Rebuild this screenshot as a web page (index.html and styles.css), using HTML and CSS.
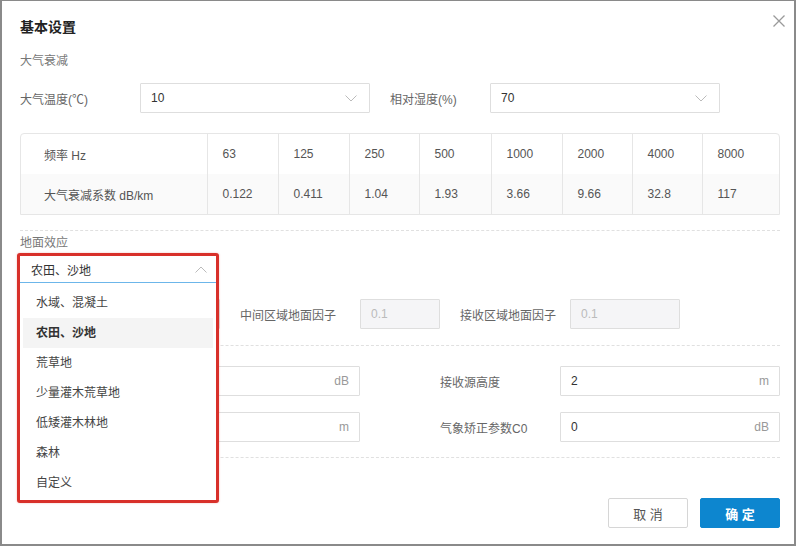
FILE: index.html
```html
<!DOCTYPE html>
<html lang="zh-CN">
<head>
<meta charset="utf-8">
<title>基本设置</title>
<link rel="stylesheet" href="styles.css">
</head>
<body>
<div class="dialog">
  <div class="header">
    <h1 class="title">基本设置</h1>
    <button class="close" type="button" aria-label="关闭">
      <svg width="14" height="14" viewBox="0 0 14 14"><path d="M1.5 1.5 L12.5 12.5 M12.5 1.5 L1.5 12.5" stroke="#9a9a9a" stroke-width="1.3" fill="none"/></svg>
    </button>
  </div>

  <div class="section-label">大气衰减</div>
  <div class="row atm-row">
    <span class="lbl w120">大气温度(℃)</span>
    <div class="select w230"><span class="val">10</span>
      <svg class="chev" width="12" height="7" viewBox="0 0 12 7"><path d="M0.5 0.5 L6 6 L11.5 0.5" stroke="#bbb" stroke-width="1" fill="none"/></svg>
    </div>
    <span class="lbl w100 gap20">相对湿度(%)</span>
    <div class="select w230"><span class="val">70</span>
      <svg class="chev" width="12" height="7" viewBox="0 0 12 7"><path d="M0.5 0.5 L6 6 L11.5 0.5" stroke="#bbb" stroke-width="1" fill="none"/></svg>
    </div>
  </div>

  <div class="table-wrap">
    <table class="freq">
      <colgroup>
        <col class="c-first"><col class="c71"><col class="c71"><col class="c70"><col class="c72"><col class="c71"><col class="c70"><col class="c70"><col>
      </colgroup>
      <tr class="r1">
        <td class="first">频率 Hz</td><td>63</td><td>125</td><td>250</td><td>500</td><td>1000</td><td>2000</td><td>4000</td><td>8000</td>
      </tr>
      <tr class="r2">
        <td class="first">大气衰减系数 dB/km</td><td>0.122</td><td>0.411</td><td>1.04</td><td>1.93</td><td>3.66</td><td>9.66</td><td>32.8</td><td>117</td>
      </tr>
    </table>
  </div>

  <div class="divider d1"></div>

  <div class="section-label ground-label">地面效应</div>
  <div class="select w196 ground-select"></div>

  <div class="row factor-row">
    <span class="lbl w100"></span>
    <div class="input disabled w100"></div>
    <span class="lbl w120 gap20">中间区域地面因子</span>
    <div class="input disabled w80"><span class="val">0.1</span></div>
    <span class="lbl w110 gap20">接收区域地面因子</span>
    <div class="input disabled w110"><span class="val">0.1</span></div>
  </div>

  <div class="divider d2"></div>

  <div class="row field-row fr1">
    <span class="lbl w120"></span>
    <div class="input w220"><span class="val"></span><span class="unit">dB</span></div>
    <span class="lbl w120 gap80">接收源高度</span>
    <div class="input w220"><span class="val">2</span><span class="unit">m</span></div>
  </div>
  <div class="row field-row fr2">
    <span class="lbl w120"></span>
    <div class="input w220"><span class="val"></span><span class="unit">m</span></div>
    <span class="lbl w120 gap80">气象矫正参数C0</span>
    <div class="input w220"><span class="val">0</span><span class="unit">dB</span></div>
  </div>

  <div class="divider d3"></div>

  <div class="footer">
    <button class="btn btn-cancel" type="button">取 消</button>
    <button class="btn btn-ok" type="button">确 定</button>
  </div>

  <div class="dropdown">
    <div class="dd-select">
      <span class="val">农田、沙地</span>
      <svg class="chev" width="12" height="7" viewBox="0 0 12 7"><path d="M0.5 6.5 L6 1 L11.5 6.5" stroke="#bbb" stroke-width="1" fill="none"/></svg>
    </div>
    <ul class="dd-list">
      <li>水域、混凝土</li>
      <li class="active">农田、沙地</li>
      <li>荒草地</li>
      <li>少量灌木荒草地</li>
      <li>低矮灌木林地</li>
      <li>森林</li>
      <li>自定义</li>
    </ul>
  </div>
</div>
</body>
</html>
```

FILE: styles.css
```css
* { box-sizing: border-box; }

html, body {
  margin: 0;
  padding: 0;
  background: #fff;
}

body {
  font-family: "Liberation Sans", "Noto Sans CJK SC", sans-serif;
  font-size: 12px;
  color: #555;
}

.dialog {
  position: relative;
  width: 796px;
  height: 546px;
  border-top: 1px solid #8a8a8a;
  border-left: 2px solid #8a8a8a;
  border-right: 2px solid #8a8a8a;
  border-bottom: 2px solid #8a8a8a;
  padding: 16px 14px 0 18px;
  background: #fff;
}

.header {
  display: flex;
  align-items: center;
  justify-content: space-between;
  height: 20px;
}

.title {
  margin: 0;
  font-size: 14px;
  line-height: 20px;
  font-weight: bold;
  color: #222;
}

.close {
  position: absolute;
  top: 13px;
  right: 8px;
  border: 0;
  padding: 0;
  background: none;
  width: 14px;
  height: 14px;
  display: flex;
}

.section-label {
  margin-top: 15px;
  line-height: 18px;
  color: #777;
}

.row {
  display: flex;
  align-items: center;
}

.atm-row { margin-top: 13px; }

.lbl {
  color: #666;
  flex: none;
  white-space: nowrap;
}

.w100 { width: 100px; }
.w110 { width: 110px; }
.w120 { width: 120px; }
.w80 { width: 80px; }
.w196 { width: 196px; }
.w220 { width: 220px; }
.w230 { width: 230px; }
.gap20 { margin-left: 20px; }
.gap80 { margin-left: 80px; }

.select, .input {
  flex: none;
  height: 30px;
  border: 1px solid #dedede;
  border-radius: 1px;
  display: flex;
  align-items: center;
  justify-content: space-between;
  padding: 0 12px 0 10px;
  color: #333;
  background: #fff;
}

.select .chev { margin-top: 1px; }

.input.disabled {
  background: #f5f5f7;
  color: #bbb;
}

.unit {
  color: #999;
}

.input { padding-right: 10px; }

.table-wrap {
  margin-top: 20px;
  border: 1px solid #e6e6e6;
  border-radius: 4px 4px 0 0;
  overflow: hidden;
}

.freq {
  width: 100%;
  border-collapse: collapse;
  table-layout: fixed;
}

.c-first { width: 186px; }
.c70 { width: 70px; }
.c71 { width: 71px; }
.c72 { width: 72px; }

.freq td {
  height: 40px;
  padding: 0 0 0 15px;
  border-left: 1px solid #e6e6e6;
  color: #555;
  white-space: nowrap;
}

.freq td.first {
  border-left: 0;
  padding-left: 23px;
}

.freq .r2 td { background: #fafafa; }

.divider {
  height: 0;
  border-top: 1px dashed #e0e0e0;
}

.d1 { margin-top: 15px; }
.ground-label { margin-top: 3px; }
.ground-select { margin-top: 2px; }

.factor-row { margin-top: 15px; }
.d2 { margin-top: 16px; }
.fr1 { margin-top: 20px; }
.fr2 { margin-top: 16px; }
.d3 { margin-top: 15px; }

.footer {
  margin-top: 40px;
  display: flex;
  justify-content: flex-end;
  gap: 12px;
}

.btn {
  width: 80px;
  height: 30px;
  border-radius: 2px;
  font-family: "Liberation Sans", "Noto Sans CJK SC", sans-serif;
  font-size: 13px;
  cursor: pointer;
}

.btn-cancel {
  background: #fff;
  border: 1px solid #d6d6d6;
  color: #555;
}

.btn-ok {
  background: #0d86cf;
  border: 1px solid #0d86cf;
  color: #fff;
  font-weight: bold;
}

/* open dropdown with annotation frame */
.dropdown {
  position: absolute;
  left: 15px;
  top: 252px;
  width: 202px;
  height: 250px;
  border: 3px solid #d8302a;
  border-radius: 3px;
  background: #fff;
  box-shadow: 0 0 2px rgba(216, 48, 42, 0.35);
}

.dd-select {
  height: 27px;
  border-bottom: 1px solid #6cb6ea;
  display: flex;
  align-items: center;
  justify-content: space-between;
  padding: 0 9px 0 11px;
  color: #333;
  font-size: 12px;
}

.dd-list {
  list-style: none;
  margin: 5px 0 0;
  padding: 0 3px;
}

.dd-list li {
  height: 30px;
  line-height: 30px;
  padding-left: 13px;
  color: #444;
}

.dd-list li.active {
  background: #f4f4f4;
  font-weight: bold;
  color: #333;
}
```
